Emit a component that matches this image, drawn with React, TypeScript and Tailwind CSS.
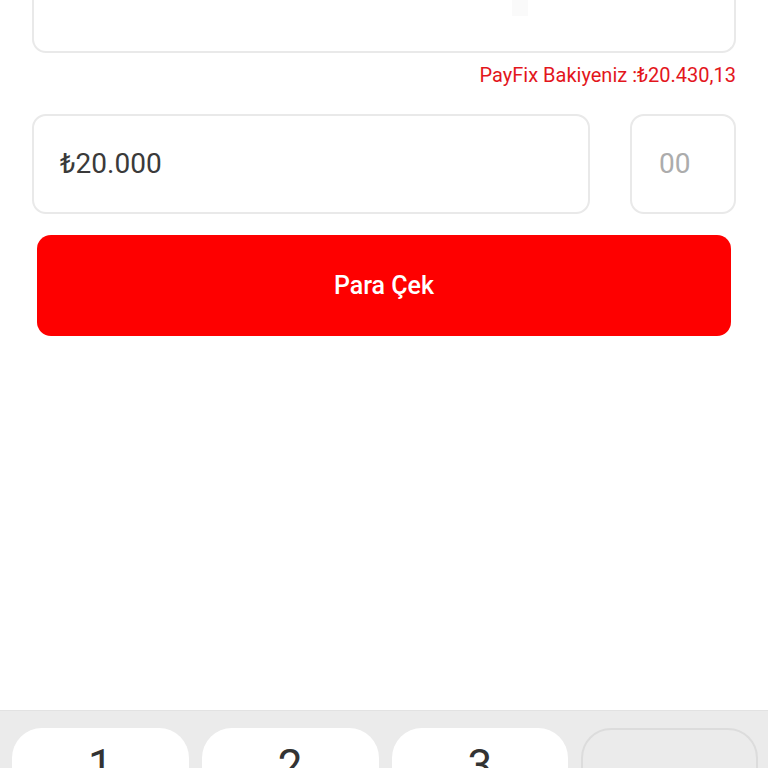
export default function App() {
  const keys = ["1", "2", "3"];

  return (
    <main className="flex h-[768px] w-[768px] flex-col overflow-hidden bg-white font-['Roboto','Liberation_Sans',sans-serif]">
      <div className="px-8">
        <div className="h-[53px] rounded-b-[14px] border-2 border-t-0 border-[#e9e9e9] bg-white">
          <div className="ml-[478px] h-[16px] w-[16px] bg-[#fafafa]" />
        </div>

        <p className="mt-[10px] text-right text-[20px] leading-6 text-[#e3161c]">PayFix Bakiyeniz :₺20.430,13</p>

        <div className="mt-[27px] flex gap-10">
          <div className="flex h-[100px] flex-1 items-center rounded-[14px] border-2 border-[#e9e9e9] px-[26px]">
            <span className="text-[28px] text-[#3a3a3a]">₺20.000</span>
          </div>
          <div className="flex h-[100px] w-[106px] items-center rounded-[14px] border-2 border-[#e9e9e9] pl-[27px]">
            <span className="text-[28px] text-[#acacac]">00</span>
          </div>
        </div>

        <div className="px-[5px]">
          <button className="mt-[21px] flex h-[101px] w-full items-center justify-center rounded-[14px] bg-[#fe0000] text-[25px] font-medium text-white">
            Para Çek
          </button>
        </div>
      </div>

      <div className="flex-1" />

      <div className="h-[58px] border-t border-[#e2e2e2] bg-[#ebebeb] pl-3 pr-[10px] pt-[17px]">
        <div className="grid grid-cols-4 gap-[13px]">
          {keys.map((k) => (
            <div key={k} className="flex h-[80px] justify-center rounded-[30px] bg-white pt-[16px]">
              <span className="text-[44px] leading-none text-[#333333]">{k}</span>
            </div>
          ))}
          <div className="h-[80px] rounded-[30px] border-2 border-[#dcdcdc] bg-[#ebebeb]" />
        </div>
      </div>
    </main>
  );
}
